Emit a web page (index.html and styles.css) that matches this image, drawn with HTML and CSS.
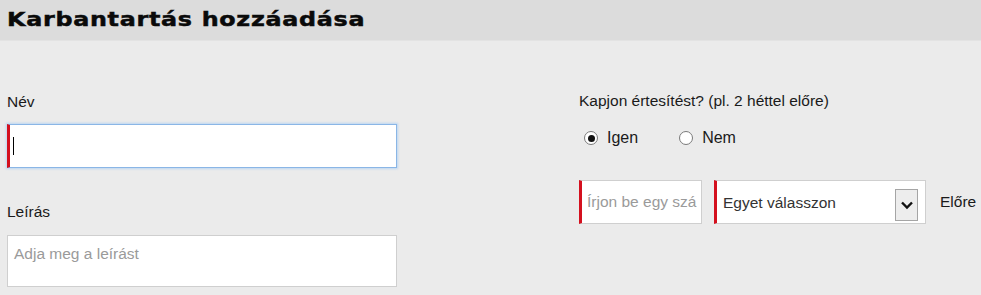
FILE: index.html
```html
<!DOCTYPE html>
<html lang="hu">
<head>
<meta charset="utf-8">
<title>Karbantartás hozzáadása</title>
<link rel="stylesheet" href="styles.css">
</head>
<body>
<header class="header">
  <h1 class="title">Karbantartás hozzáadása</h1>
</header>
<main class="form">
  <section class="col col-left">
    <label class="label">Név</label>
    <div class="field field-name required focused"><span class="caret"></span></div>
    <label class="label label-desc">Leírás</label>
    <div class="field field-desc"><span class="placeholder">Adja meg a leírást</span></div>
  </section>
  <section class="col col-right">
    <div class="label">Kapjon értesítést? (pl. 2 héttel előre)</div>
    <div class="radios">
      <span class="radio-item"><span class="radio checked"></span>Igen</span>
      <span class="radio-item"><span class="radio"></span>Nem</span>
    </div>
    <div class="inline-row">
      <div class="field field-num required"><span class="placeholder">Írjon be egy szá</span></div>
      <div class="field field-select required">
        <span class="select-text">Egyet válasszon</span>
        <span class="select-btn">
          <svg width="14" height="10" viewBox="0 0 14 10"><path d="M2 2.5 L7 7.5 L12 2.5" fill="none" stroke="#111" stroke-width="2.4"/></svg>
        </span>
      </div>
      <span class="after-text">Előre</span>
    </div>
  </section>
</main>
</body>
</html>
```

FILE: styles.css
```css
* { box-sizing: border-box; }
html, body { margin: 0; padding: 0; }
body {
  background: #ebebeb;
  font-family: "Liberation Sans", Arial, sans-serif;
  color: #1a1a1a;
  width: 981px;
  height: 295px;
  overflow: hidden;
}
.header {
  height: 41px;
  background: #dcdcdc;
  border-bottom: 1px solid #e3e3e3;
  padding-left: 7px;
}
.title {
  margin: 0;
  display: inline-block;
  font-family: "DejaVu Sans", sans-serif;
  font-weight: bold;
  font-size: 20px;
  letter-spacing: 0.6px;
  line-height: 39px;
  color: #0a0a0a;
  -webkit-text-stroke: 0.5px #0a0a0a;
  transform: scaleX(1.19);
  transform-origin: left center;
}
.form {
  display: flex;
  padding-left: 7px;
}
.col-left {
  width: 390px;
  padding-top: 52px;
  display: flex;
  flex-direction: column;
}
.col-right {
  margin-left: 182px;
  padding-top: 51px;
  display: flex;
  flex-direction: column;
}
.label {
  font-size: 15.5px;
  line-height: 18px;
  color: #1a1a1a;
}
.label-desc { margin-top: 35px; }
.field {
  background: #fff;
  border: 1px solid #cfcfcf;
  display: flex;
  align-items: center;
  font-size: 15.5px;
}
.required { border-left: 3px solid #d4101e; }
.field-name {
  margin-top: 13px;
  height: 44px;
  padding-left: 3px;
}
.focused {
  border-color: #8ab6e6;
  border-left-color: #d4101e;
  box-shadow: 0 0 2px 1px #bcd6f2;
}
.caret {
  display: block;
  width: 1px;
  height: 18px;
  background: #000;
}
.field-desc {
  margin-top: 14px;
  height: 52px;
  align-items: flex-start;
  padding: 9px 0 0 6px;
}
.placeholder {
  color: #9a9a9a;
  white-space: nowrap;
  line-height: 18px;
}
.radios {
  display: flex;
  margin-top: 19px;
  font-size: 16px;
  line-height: 18px;
  gap: 36px;
}
.radio-item {
  display: flex;
  align-items: center;
  gap: 9px;
  padding-left: 5px;
}
.radio {
  width: 14px;
  height: 14px;
  border-radius: 50%;
  border: 1px solid #7a7a7a;
  background: #fff;
  display: flex;
  align-items: center;
  justify-content: center;
}
.radio.checked::after {
  content: "";
  width: 7px;
  height: 7px;
  border-radius: 50%;
  background: #111;
}
.inline-row {
  margin-top: 33px;
  display: flex;
  align-items: center;
}
.field-num {
  width: 123px;
  height: 44px;
  padding-left: 5px;
  overflow: hidden;
}
.field-select {
  margin-left: 12px;
  width: 212px;
  height: 44px;
  padding-left: 6px;
  padding-right: 7px;
  justify-content: space-between;
}
.select-text {
  color: #333;
  white-space: nowrap;
  padding-top: 2px;
}
.select-btn {
  width: 23px;
  height: 32px;
  margin-top: 6px;
  border: 1px solid #a5a5a5;
  background: #ededed;
  display: flex;
  align-items: center;
  justify-content: center;
}
.after-text {
  margin-left: 14px;
  font-size: 15.5px;
  color: #1a1a1a;
}
```
